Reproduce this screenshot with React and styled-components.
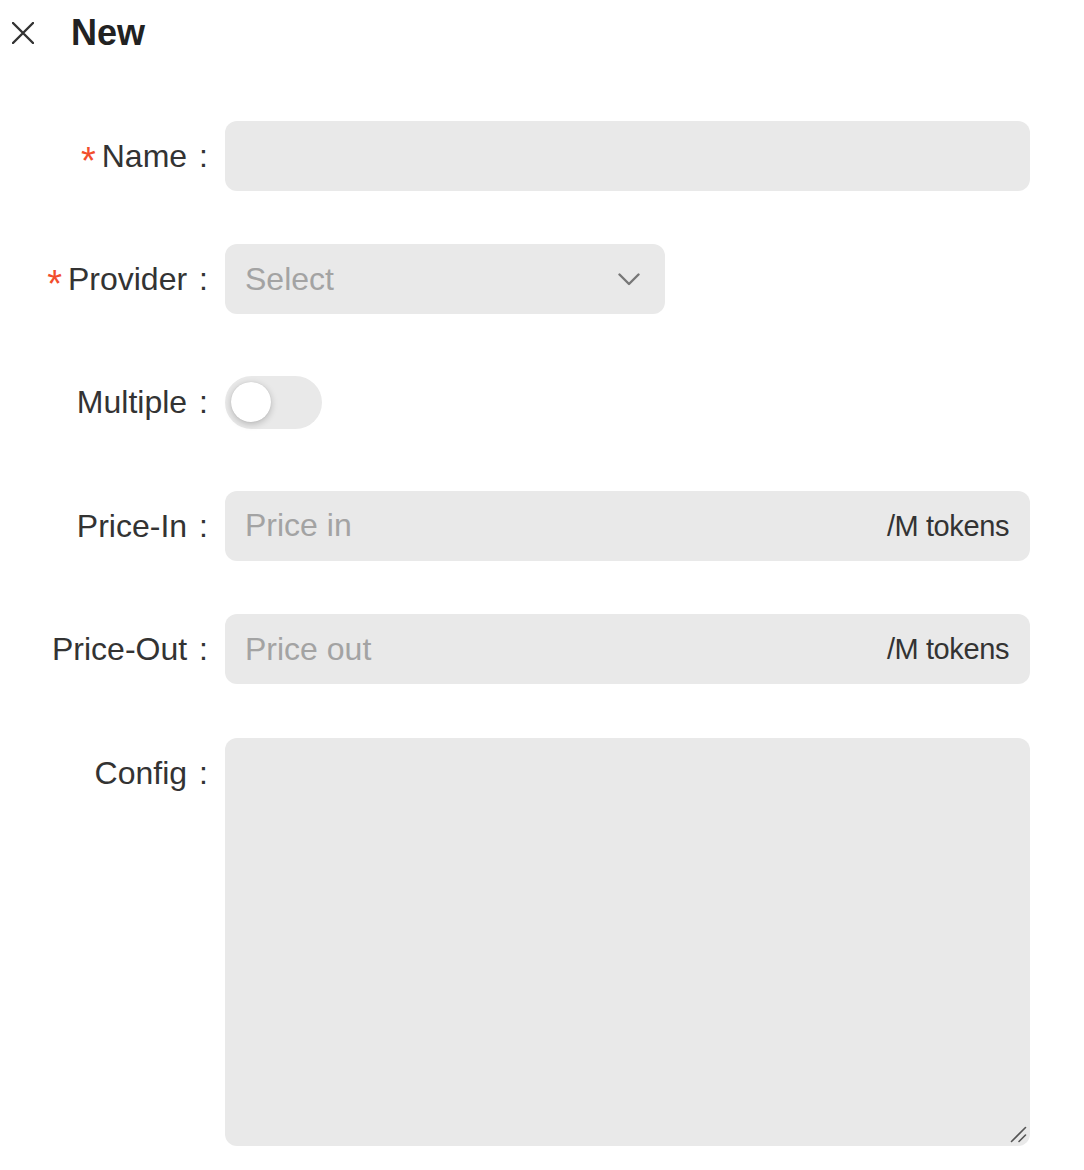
import React from "react";
import styled, { createGlobalStyle } from "styled-components";

const Global = createGlobalStyle`
  html, body { margin: 0; padding: 0; background: #ffffff; }
  body { font-family: "Liberation Sans", Arial, sans-serif; color: #333333; }
  * { box-sizing: border-box; }
`;

const Page = styled.div`
  width: 1084px;
  min-height: 1170px;
  padding: 0 54px 0 12px;
`;

const Header = styled.header`
  display: flex;
  align-items: center;
  height: 66px;
`;

const CloseButton = styled.button`
  display: flex;
  align-items: center;
  justify-content: center;
  width: 22px;
  height: 22px;
  padding: 0;
  border: 0;
  background: transparent;
  cursor: pointer;
  margin-right: 37px;
`;

const Title = styled.h1`
  margin: 0;
  font-size: 36px;
  line-height: 36px;
  font-weight: 700;
  color: #222222;
`;

const Form = styled.form`
  margin-top: 54.7px;
  display: grid;
  grid-template-columns: 213px 805px;
  row-gap: 53.4px;
`;

const Label = styled.label`
  display: flex;
  justify-content: flex-end;
  align-items: flex-start;
  padding-right: 17px;
  height: 70px;
  font-size: 32px;
  line-height: 70px;
  padding-top: 0;
  color: #333333;
  white-space: nowrap;
`;

const Star = styled.span`
  font-size: 38px;
  color: #f24e2c;
  margin-right: 6px;
  transform: translateY(5px);
`;

const Colon = styled.span`
  margin-left: 12px;
`;

const Field = styled.div`
  display: flex;
  align-items: center;
  height: ${(p) => p.$h || 70}px;
`;

const InputBox = styled.div`
  display: flex;
  align-items: center;
  width: ${(p) => p.$w || 805}px;
  height: 70px;
  background: #e9e9e9;
  border-radius: 12px;
  padding: 0 21px 0 20px;
`;

const TextInput = styled.input`
  flex: 1;
  min-width: 0;
  height: 100%;
  border: 0;
  outline: none;
  background: transparent;
  padding: 0;
  font-family: "Liberation Sans", Arial, sans-serif;
  font-size: 32px;
  color: #333333;
  &::placeholder { color: #a3a3a3; }
`;

const Suffix = styled.span`
  font-size: 29px;
  letter-spacing: -0.4px;
  color: #333333;
  padding-top: 1px;
`;

const SelectBox = styled(InputBox)`
  justify-content: space-between;
  padding-right: 25px;
  cursor: pointer;
`;

const Placeholder = styled.span`
  font-size: 32px;
  color: #a3a3a3;
  padding-top: 1px;
`;

const SwitchTrack = styled.button`
  display: flex;
  align-items: center;
  width: 97px;
  height: 53px;
  padding: 0 0 0 6px;
  border: 0;
  border-radius: 27px;
  background: #e9e9e9;
  cursor: pointer;
`;

const SwitchKnob = styled.span`
  width: 40px;
  height: 40px;
  border-radius: 50%;
  background: #ffffff;
  box-shadow: 0 2px 7px rgba(0, 0, 0, 0.22), 0 0 1px rgba(0, 0, 0, 0.15);
`;

const AreaWrap = styled.div`
  position: relative;
  width: 805px;
  height: 408px;
`;

const TextArea = styled.textarea`
  display: block;
  width: 100%;
  height: 100%;
  border: 0;
  outline: none;
  border-radius: 12px;
  background: #e9e9e9;
  padding: 16px 20px;
  font-family: "Liberation Sans", Arial, sans-serif;
  font-size: 32px;
  color: #333333;
  resize: none;
`;

const Grip = styled.svg`
  position: absolute;
  right: 3px;
  bottom: 3px;
  pointer-events: none;
`;

const CloseIcon = () => (
  <svg width="22" height="22" viewBox="0 0 22 22" fill="none">
    <path d="M1 1L21 21M21 1L1 21" stroke="#333" strokeWidth="2.4" strokeLinecap="round" />
  </svg>
);

const Chevron = () => (
  <svg width="22" height="13" viewBox="0 0 22 13" fill="none">
    <path d="M1.5 1.5L11 11L20.5 1.5" stroke="#777" strokeWidth="2.4" strokeLinecap="round" strokeLinejoin="round" />
  </svg>
);

export default function App() {
  return (
    <Page>
      <Global />
      <Header>
        <CloseButton type="button" aria-label="Close">
          <CloseIcon />
        </CloseButton>
        <Title>New</Title>
      </Header>
      <Form onSubmit={(e) => e.preventDefault()}>
        <Label>
          <Star>*</Star>Name<Colon>:</Colon>
        </Label>
        <Field>
          <InputBox>
            <TextInput />
          </InputBox>
        </Field>

        <Label>
          <Star>*</Star>Provider<Colon>:</Colon>
        </Label>
        <Field>
          <SelectBox $w={440}>
            <Placeholder>Select</Placeholder>
            <Chevron />
          </SelectBox>
        </Field>

        <Label>
          Multiple<Colon>:</Colon>
        </Label>
        <Field>
          <SwitchTrack type="button" aria-label="Multiple">
            <SwitchKnob />
          </SwitchTrack>
        </Field>

        <Label>
          Price-In<Colon>:</Colon>
        </Label>
        <Field>
          <InputBox>
            <TextInput placeholder="Price in" />
            <Suffix>/M tokens</Suffix>
          </InputBox>
        </Field>

        <Label>
          Price-Out<Colon>:</Colon>
        </Label>
        <Field>
          <InputBox>
            <TextInput placeholder="Price out" />
            <Suffix>/M tokens</Suffix>
          </InputBox>
        </Field>

        <Label>
          Config<Colon>:</Colon>
        </Label>
        <Field $h={408}>
          <AreaWrap>
            <TextArea />
            <Grip width="18" height="18" viewBox="0 0 18 18" fill="none">
              <path d="M2.5 16.5L16.5 2.5M10 16.5L16.5 10" stroke="#555" strokeWidth="1.6" strokeLinecap="round" />
            </Grip>
          </AreaWrap>
        </Field>
      </Form>
    </Page>
  );
}
